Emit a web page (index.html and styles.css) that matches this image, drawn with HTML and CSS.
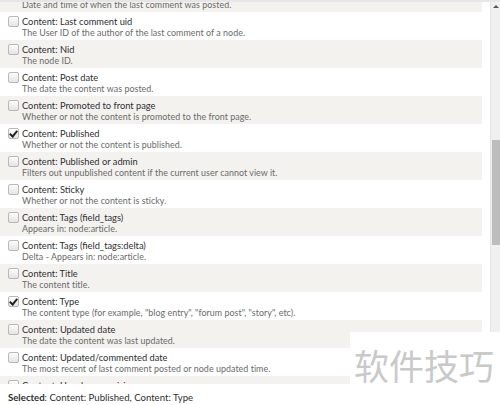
FILE: index.html
```html
<!DOCTYPE html>
<html lang="en">
<head>
<meta charset="utf-8">
<title>Fields</title>
<link rel="stylesheet" href="styles.css">
</head>
<body>
<div class="picker">
  <div class="pane">
    <ul class="fields">
      <li class="field"><span class="box"></span><div class="text"><div class="name">Content: Last comment time</div><div class="desc">Date and time of when the last comment was posted.</div></div></li>
      <li class="field"><span class="box"></span><div class="text"><div class="name">Content: Last comment uid</div><div class="desc">The User ID of the author of the last comment of a node.</div></div></li>
      <li class="field"><span class="box"></span><div class="text"><div class="name">Content: Nid</div><div class="desc">The node ID.</div></div></li>
      <li class="field"><span class="box"></span><div class="text"><div class="name">Content: Post date</div><div class="desc">The date the content was posted.</div></div></li>
      <li class="field"><span class="box"></span><div class="text"><div class="name">Content: Promoted to front page</div><div class="desc">Whether or not the content is promoted to the front page.</div></div></li>
      <li class="field"><span class="box checked"></span><div class="text"><div class="name">Content: Published</div><div class="desc">Whether or not the content is published.</div></div></li>
      <li class="field"><span class="box"></span><div class="text"><div class="name">Content: Published or admin</div><div class="desc">Filters out unpublished content if the current user cannot view it.</div></div></li>
      <li class="field"><span class="box"></span><div class="text"><div class="name">Content: Sticky</div><div class="desc">Whether or not the content is sticky.</div></div></li>
      <li class="field"><span class="box"></span><div class="text"><div class="name">Content: Tags (field_tags)</div><div class="desc">Appears in: node:article.</div></div></li>
      <li class="field"><span class="box"></span><div class="text"><div class="name">Content: Tags (field_tags:delta)</div><div class="desc">Delta - Appears in: node:article.</div></div></li>
      <li class="field"><span class="box"></span><div class="text"><div class="name">Content: Title</div><div class="desc">The content title.</div></div></li>
      <li class="field"><span class="box checked"></span><div class="text"><div class="name">Content: Type</div><div class="desc">The content type (for example, "blog entry", "forum post", "story", etc).</div></div></li>
      <li class="field"><span class="box"></span><div class="text"><div class="name">Content: Updated date</div><div class="desc">The date the content was last updated.</div></div></li>
      <li class="field"><span class="box"></span><div class="text"><div class="name">Content: Updated/commented date</div><div class="desc">The most recent of last comment posted or node updated time.</div></div></li>
      <li class="field"><span class="box"></span><div class="text"><div class="name">Content: User has a revision</div><div class="desc">All nodes where the specified user has a revision.</div></div></li>
    </ul>
    <div class="scrollbar">
      <span class="arrow"></span>
      <span class="thumb"></span>
    </div>
  </div>
  <div class="selected"><b>Selected</b>: Content: Published, Content: Type</div>
  <div class="watermark">软件技巧</div>
</div>
</body>
</html>
```
FILE: styles.css
```css
html, body {
  margin: 0;
  padding: 0;
  background: #fff;
}

body {
  font-family: Lato, "Open Sans", sans-serif;
  color: #333;
  width: 500px;
  height: 405px;
  overflow: hidden;
}

.picker {
  position: relative;
  height: 405px;
}

.pane {
  display: flex;
  height: 384px;
  overflow: hidden;
  border-top: 2px solid #e6e6e6;
  box-sizing: border-box;
}

.fields {
  list-style: none;
  margin: -18px 0 0 0;
  padding: 0;
  width: 482px;
  flex: none;
}

.field {
  display: flex;
  gap: 3px;
  height: 28px;
  box-sizing: border-box;
  padding: 4px 0 0 8px;
  background: #fff;
}

.field:nth-child(odd) {
  background: #f3f2ef;
}

.box {
  flex: none;
  width: 9px;
  height: 9px;
  margin-top: 0;
  border: 1px solid #b8b8b8;
  border-radius: 2px;
  background: linear-gradient(#fdfdfd, #e4e4e4);
  position: relative;
}

.box.checked::after {
  content: "";
  position: absolute;
  left: 2px;
  top: 0px;
  width: 3px;
  height: 6px;
  border: solid #222;
  border-width: 0 2px 2px 0;
  transform: rotate(40deg);
}

.name {
  font-size: 9.3px;
  line-height: 11px;
  color: #2f2f2f;
}

.desc {
  font-size: 8.9px;
  line-height: 11px;
  color: #6a6a6a;
  letter-spacing: 0.05px;
}

.scrollbar {
  margin-left: 8px;
  width: 10px;
  flex: none;
  background: #f0f0f0;
  border-left: 1px solid #e4e4e4;
  box-sizing: border-box;
  display: flex;
  flex-direction: column;
  align-items: center;
}

.arrow {
  margin-top: 3px;
  width: 0;
  height: 0;
  border-left: 3px solid transparent;
  border-right: 3px solid transparent;
  border-bottom: 3px solid #555;
}

.thumb {
  margin-top: 132px;
  width: 8px;
  height: 105px;
  background: #bdbdbd;
}

.selected {
  padding: 7px 0 0 8px;
  font-size: 9.6px;
  line-height: 14px;
  color: #2f2f2f;
}

.selected b {
  font-weight: 700;
}

/* site stamp laid over the lower right corner */
.watermark {
  position: absolute;
  left: 350px;
  top: 332px;
  width: 150px;
  height: 52px;
  background: #fff;
  color: #c9c9c9;
  font-family: "Noto Sans CJK SC", sans-serif;
  font-size: 35px;
  line-height: 36px;
  padding: 15px 0 0 4px;
  box-sizing: border-box;
}
```
